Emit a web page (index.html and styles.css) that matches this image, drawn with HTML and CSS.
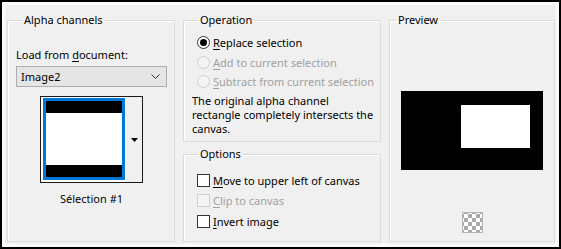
FILE: index.html
```html
<!DOCTYPE html>
<html lang="en">
<head>
    <meta charset="UTF-8">
    <title>Load Selection From Alpha Channel</title>
    <link rel="stylesheet" href="styles.css">
</head>
<body>
    <div class="window">
        <fieldset class="group alpha">
            <legend>Alpha channels</legend>
            <div class="field-label">Load from <u>d</u>ocument:</div>
            <div class="select">
                <span>Image2</span>
                <svg width="9" height="6" viewBox="0 0 9 6"><path d="M0.5 0.5 L4.5 4.5 L8.5 0.5" fill="none" stroke="#333" stroke-width="1"/></svg>
            </div>
            <div class="thumb-picker">
                <div class="thumb">
                    <div class="thumb-frame">
                        <div class="thumb-img"></div>
                    </div>
                </div>
                <div class="thumb-drop">
                    <svg width="7" height="4" viewBox="0 0 7 4"><path d="M0 0 H7 L3.5 4 Z" fill="#000"/></svg>
                </div>
            </div>
            <div class="caption">Sélection #1</div>
        </fieldset>

        <div class="middle">
            <fieldset class="group operation">
                <legend>Operation</legend>
                <div class="option">
                    <span class="radio checked"></span>
                    <span><u>R</u>eplace selection</span>
                </div>
                <div class="option disabled">
                    <span class="radio"></span>
                    <span><u>A</u>dd to current selection</span>
                </div>
                <div class="option disabled">
                    <span class="radio"></span>
                    <span><u>S</u>ubtract from current selection</span>
                </div>
                <p class="note">The original alpha channel<br>rectangle completely intersects the<br>canvas.</p>
            </fieldset>

            <fieldset class="group options">
                <legend>Options</legend>
                <div class="option check-row">
                    <span class="checkbox"></span>
                    <span><u>M</u>ove to upper left of canvas</span>
                </div>
                <div class="option check-row disabled">
                    <span class="checkbox"></span>
                    <span><u>C</u>lip to canvas</span>
                </div>
                <div class="option check-row">
                    <span class="checkbox"></span>
                    <span><u>I</u>nvert image</span>
                </div>
            </fieldset>
        </div>

        <fieldset class="group preview">
            <legend>Preview</legend>
            <div class="preview-canvas">
                <div class="preview-sel"></div>
            </div>
            <div class="checker"></div>
        </fieldset>
    </div>
</body>
</html>
```

FILE: styles.css
```css
* {
    box-sizing: border-box;
}

body {
    margin: 0;
    background: #000;
    font-family: 'Noto Sans', 'Open Sans', sans-serif;
    font-size: 11px;
    color: #000;
    white-space: nowrap;
}

u {
    text-decoration: underline;
    text-underline-offset: 2px;
}

.window {
    width: 561px;
    height: 249px;
    border: 2px solid #000;
    background: #f0f0f0;
    box-shadow: inset 0 0 0 3px #fafafa;
    padding: 10px 0 0 5px;
    display: flex;
    gap: 8px;
}

.group {
    margin: 0;
    padding: 0 0 0 8px;
    border: 1px solid #dcdcdc;
    box-shadow: inset 1px 1px 0 #fff;
    min-width: 0;
}

.group legend {
    padding: 0 2px;
    margin-left: 6px;
    line-height: 16px;
    height: 16px;
}

/* left column */
.alpha {
    width: 168px;
    height: 230px;
}

.field-label {
    margin-top: 19px;
    line-height: 16px;
}

.select {
    margin-top: 3px;
    width: 151px;
    height: 21px;
    border: 1px solid #adadad;
    background: #e5e5e5;
    display: flex;
    align-items: center;
    justify-content: space-between;
    padding: 0 6px 0 4px;
}

.thumb-picker {
    margin: 9px 0 0 24px;
    width: 103px;
    height: 87px;
    border: 1px solid #1a1a1a;
    display: flex;
}

.thumb {
    background: #fff;
    padding: 1px 0 1px 2px;
}

.thumb-frame {
    border: 3px solid #0078d7;
}

.thumb-img {
    width: 76px;
    height: 76px;
    background: #fff;
    border-top: 12px solid #000;
    border-bottom: 12px solid #000;
}

.thumb-drop {
    flex: 1;
    background: #f0f0f0;
    border-left: 1px solid #fff;
    display: flex;
    align-items: center;
    justify-content: center;
    padding-left: 1px;
}

.caption {
    margin: 8px 0 0 24px;
    width: 103px;
    text-align: center;
    line-height: 16px;
}

/* middle column */
.middle {
    width: 198px;
    display: flex;
    flex-direction: column;
    gap: 4px;
}

.operation {
    height: 130px;
    padding-top: 5px;
}

.options {
    height: 96px;
}

.option {
    display: flex;
    align-items: center;
    gap: 3px;
    height: 19.5px;
    padding-left: 5px;
}

.option.disabled {
    color: #a0a0a0;
}

.radio {
    width: 13px;
    height: 13px;
    border-radius: 50%;
    border: 1px solid #333;
    background: #fff;
    position: relative;
}

.radio.checked::after {
    content: "";
    position: absolute;
    left: 2px;
    top: 2px;
    width: 7px;
    height: 7px;
    border-radius: 50%;
    background: #000;
}

.disabled .radio,
.disabled .checkbox {
    border-color: #cfcfcf;
    background: #f4f4f4;
}

.note {
    margin: 2px 0 0;
    line-height: 14px;
}

.check-row {
    height: 20.5px;
}

.check-row:first-of-type {
    margin-top: 8px;
}

.checkbox {
    width: 13px;
    height: 13px;
    border: 1px solid #333;
    background: #fff;
}

/* right column */
.preview {
    width: 166px;
    height: 230px;
    padding: 0;
    display: flex;
    flex-direction: column;
    align-items: center;
}

.preview-canvas {
    margin-top: 63px;
    width: 142px;
    height: 79px;
    background: #000;
    padding: 14px 0 0 60px;
}

.preview-sel {
    width: 69px;
    height: 43px;
    background: #fff;
}

.checker {
    margin-top: 42px;
    width: 21px;
    height: 21px;
    border: 1px solid #b4b4b4;
    background-color: #fff;
    background-image:
        linear-gradient(45deg, #a8a8a8 25%, transparent 25%, transparent 75%, #a8a8a8 75%),
        linear-gradient(45deg, #a8a8a8 25%, transparent 25%, transparent 75%, #a8a8a8 75%);
    background-size: 8px 8px;
    background-position: 1px 1px, 5px 5px;
}
```
